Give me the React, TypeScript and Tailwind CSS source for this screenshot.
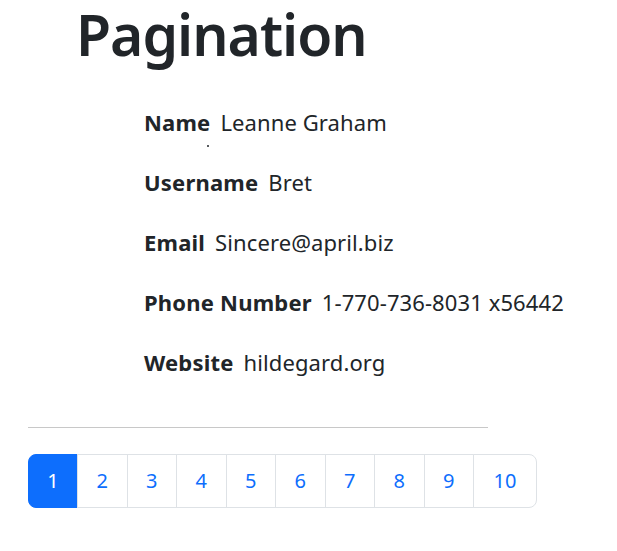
const user = [
  { label: 'Name', value: 'Leanne Graham' },
  { label: 'Username', value: 'Bret' },
  { label: 'Email', value: 'Sincere@april.biz' },
  { label: 'Phone Number', value: '1-770-736-8031 x56442' },
  { label: 'Website', value: 'hildegard.org' },
];

const pages = [1, 2, 3, 4, 5, 6, 7, 8, 9, 10];

export default function App() {
  return (
    <div className="flex min-h-[551px] flex-col items-start bg-white px-[28px] text-[#212529] [font-family:'Noto_Sans',sans-serif]">
      <h1 className="-mt-[5px] ml-[48px] text-[57px] font-semibold leading-[78px] tracking-[-1px]">Pagination</h1>

      <dl className="ml-[116px] mt-[34px] flex flex-col gap-[30px] text-[22px] leading-[30px]">
        {user.map((row, i) => (
          <div key={row.label} className="relative flex gap-[10px]">
            <dt className="font-bold tracking-[0.2px]">{row.label}</dt>
            <dd className="tracking-[0.1px]">{row.value}</dd>
            {i === 0 && <span className="absolute left-[63px] top-[38px] h-[2px] w-[2px] rounded-full bg-[#212529]" />}
          </div>
        ))}
      </dl>

      <hr className="mt-[50px] w-[460px] border-t border-[#c8c8c8]" />

      <nav className="mt-[26px]">
        <ul className="flex text-[20px] leading-[30px]">
          {pages.map((p, i) => (
            <li key={p}>
              <a
                href="#"
                className={
                  p === 1
                    ? 'flex h-[54px] w-[50px] items-center justify-center rounded-l-[8px] border border-[#0d6efd] bg-[#0d6efd] text-white'
                    : i === pages.length - 1
                      ? '-ml-px flex h-[54px] w-[64px] items-center justify-center rounded-r-[8px] border border-[#dee2e6] bg-white text-[#0d6efd]'
                      : '-ml-px flex h-[54px] w-[50.5px] items-center justify-center border border-[#dee2e6] bg-white text-[#0d6efd]'
                }
              >
                {p}
              </a>
            </li>
          ))}
        </ul>
      </nav>
    </div>
  );
}
